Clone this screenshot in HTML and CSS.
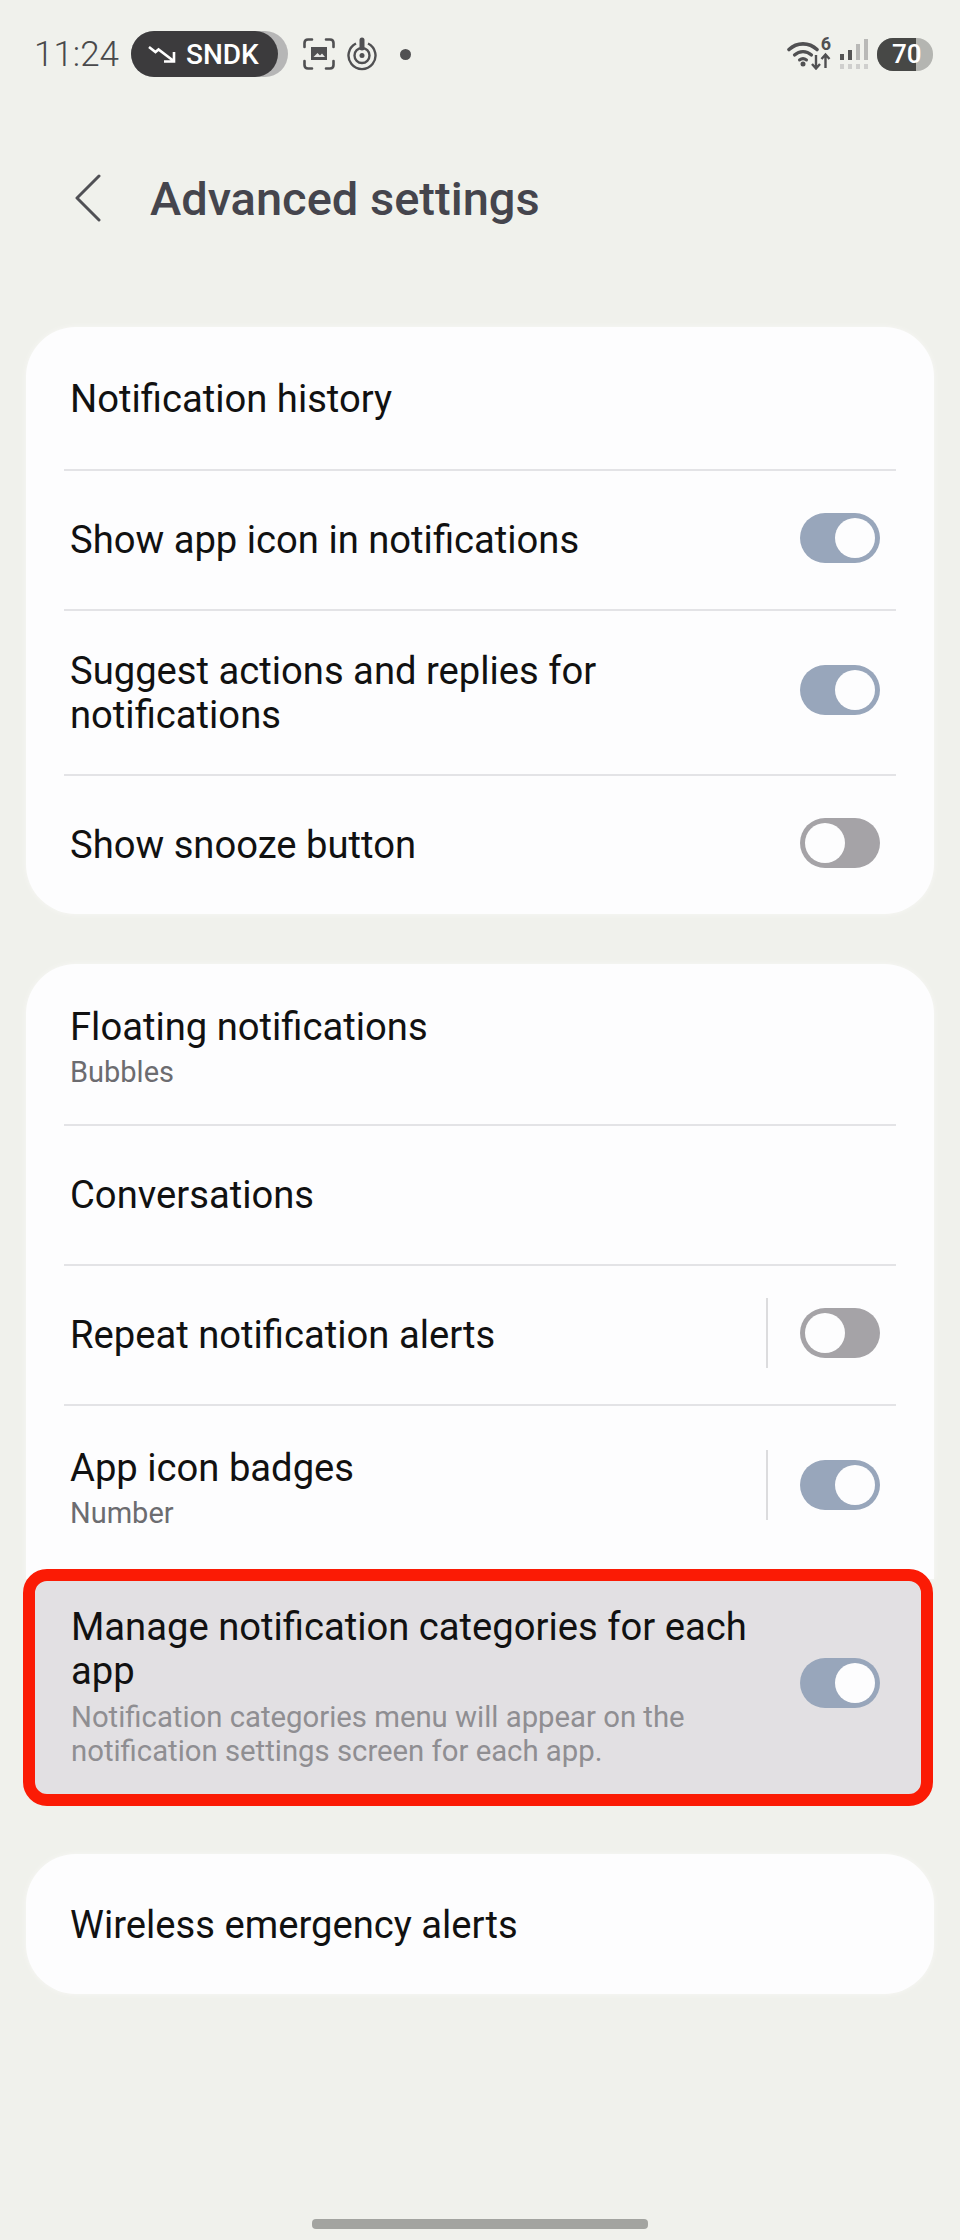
FILE: index.html
```html
<!DOCTYPE html>
<html lang="en">
<head>
    <meta charset="UTF-8">
    <meta name="viewport" content="width=device-width, initial-scale=1.0">
    <title>Advanced settings</title>
    <link rel="stylesheet" href="styles.css">
</head>
<body>
    <div class="status-bar">
        <span class="clock">11:24</span>
        <div class="ticker">
            <div class="ticker-pill">
                <svg class="ticker-arrow" width="28" height="18" viewBox="0 0 28 18" fill="none" stroke="#fff" stroke-width="2.6">
                    <path d="M1 2l6.5 5 3-2.5L25 15.5M26 7v9.5H16"/>
                </svg>
                <span>SNDK</span>
            </div>
        </div>
        <svg class="icon-capture" width="32" height="32" viewBox="0 0 32 32" fill="none" stroke="#505052" stroke-width="2.6" stroke-linecap="round">
            <path d="M1.5 9V5q0-3.5 3.500-3.500H9M23 1.500h4q3.500 0 3.500 3.500V9M30.500 23v4q0 3.500-3.500 3.500h-4M9 30.500H5q-3.500 0-3.500-3.500v-4"/>
            <path d="M8 9h16v13H8z" fill="#505052" stroke="none"/>
            <path d="M10.500 19l4-4 2.500 2.500 2-2 3 3.500z" fill="#e8e8e6" stroke="none"/>
        </svg>
        <svg class="icon-target" width="30" height="34" viewBox="0 0 30 34" fill="none" stroke="#505052" stroke-width="2.400">
            <path d="M9 6.500a13.500 13.500 0 1 0 12 0"/>
            <circle cx="15" cy="18.500" r="7.500"/>
            <circle cx="15" cy="18.500" r="2.500" fill="#505052" stroke="none"/>
            <path d="M15 3v8" stroke-width="5" stroke-linecap="round"/>
        </svg>
        <span class="status-dot"></span>

        <div class="status-right">
            <div class="wifi">
                <svg width="44" height="32" viewBox="0 0 44 32" fill="none" stroke="#505052">
                    <path d="M2 11.500c8-7.500 20-7.500 28 0" stroke-width="3.600" stroke-linecap="round"/>
                    <path d="M7.500 17c5-4.500 12-4.500 17 0" stroke-width="3.200" stroke-linecap="round"/>
                    <path d="M12.500 22c2.500-2 4.500-2 7 0" stroke-width="3" stroke-linecap="round"/>
                    <circle cx="16" cy="26" r="2.500" fill="#505052" stroke="none"/>
                    <path d="M29 17v13M25 26l4 4.500 4-4.500M38.500 30V17M34.500 21l4-4.500 4 4.500" stroke-width="2.400"/>
                </svg>
                <span class="wifi-gen">6</span>
            </div>
            <svg class="signal" width="28" height="32" viewBox="0 0 28 32">
                <rect x="0" y="16" width="4" height="6" fill="#555"/>
                <rect x="8" y="12" width="4" height="10" fill="#555"/>
                <rect x="16" y="6" width="4" height="16" fill="#b9b9b7"/>
                <rect x="24" y="1" width="4" height="21" fill="#b9b9b7"/>
                <rect x="0" y="26" width="4" height="5" fill="#cfcfcd"/>
                <rect x="8" y="26" width="4" height="5" fill="#cfcfcd"/>
                <rect x="16" y="26" width="4" height="5" fill="#cfcfcd"/>
                <rect x="24" y="26" width="4" height="5" fill="#cfcfcd"/>
            </svg>
            <div class="battery"><span class="battery-level">70</span></div>
        </div>
    </div>

    <div class="header">
        <svg class="back" width="26" height="48" viewBox="0 0 26 48" fill="none" stroke="#505055" stroke-width="3" stroke-linecap="round" stroke-linejoin="round">
            <path d="M24 2L2 24l22 22"/>
        </svg>
        <h1>Advanced settings</h1>
    </div>

    <div class="card first">
        <div class="row row-short"><div class="row-text"><div class="row-title">Notification history</div></div></div>
        <div class="row row-line">
            <div class="row-text"><div class="row-title">Show app icon in notifications</div></div>
            <span class="toggle on"></span>
        </div>
        <div class="row row-line row-tall">
            <div class="row-text"><div class="row-title">Suggest actions and replies for notifications</div></div>
            <span class="toggle on"></span>
        </div>
        <div class="row row-line">
            <div class="row-text"><div class="row-title">Show snooze button</div></div>
            <span class="toggle"></span>
        </div>
    </div>

    <div class="group">
        <div class="card card-open">
            <div class="row row-sub">
                <div class="row-text">
                    <div class="row-title">Floating notifications</div>
                    <div class="row-sub-text">Bubbles</div>
                </div>
            </div>
            <div class="row row-line"><div class="row-text"><div class="row-title">Conversations</div></div></div>
            <div class="row row-line">
                <div class="row-text"><div class="row-title">Repeat notification alerts</div></div>
                <span class="row-sep"></span>
                <span class="toggle"></span>
            </div>
            <div class="row row-line row-tall">
                <div class="row-text">
                    <div class="row-title">App icon badges</div>
                    <div class="row-sub-text">Number</div>
                </div>
                <span class="row-sep"></span>
                <span class="toggle on"></span>
            </div>
        </div>
        <div class="highlight">
            <div class="row-text">
                <div class="row-title">Manage notification categories for each app</div>
                <div class="row-sub-text">Notification categories menu will appear on the notification settings screen for each app.</div>
            </div>
            <span class="toggle on"></span>
        </div>
    </div>

    <div class="card last">
        <div class="row row-short row-single"><div class="row-text"><div class="row-title">Wireless emergency alerts</div></div></div>
    </div>

    <div class="home-bar"></div>
</body>
</html>
```

FILE: styles.css
```css
body {
    margin: 0;
    background: #f0f1ec;
    font-family: Roboto, "Liberation Sans", sans-serif;
    color: #111;
}

/* status bar */
.status-bar {
    height: 108px;
    display: flex;
    align-items: center;
    padding: 0 27px 0 34px;
}
.clock {
    font-size: 35px;
    font-weight: 300;
    color: #49494b;
    width: 97px;
}
.ticker {
    width: 157px;
    height: 46px;
    border-radius: 23px;
    background: #b6b6b6;
}
.ticker-pill {
    width: 147px;
    height: 46px;
    box-sizing: border-box;
    padding-left: 17px;
    border-radius: 23px;
    background: #3c3b3d;
    color: #fff;
    font-size: 28px;
    font-weight: 500;
    display: flex;
    align-items: center;
    gap: 10px;
}
.icon-capture {
    margin-left: 15px;
}
.icon-target {
    margin-left: 12px;
}
.status-dot {
    width: 11px;
    height: 11px;
    border-radius: 50%;
    background: #505052;
    margin-left: 23px;
}
.status-right {
    margin-left: auto;
    display: flex;
    align-items: center;
}
.wifi {
    display: flex;
    align-items: flex-start;
    position: relative;
    width: 44px;
}
.wifi-gen {
    position: absolute;
    right: 0;
    top: -5px;
    font-size: 18px;
    font-weight: 700;
    color: #505052;
}
.signal {
    margin-left: 9px;
}
.battery {
    width: 56px;
    height: 33px;
    margin-left: 9px;
    border-radius: 16px;
    background: #b4b5b1;
    overflow: hidden;
}
.battery-level {
    display: block;
    width: 39px;
    height: 33px;
    box-sizing: border-box;
    padding-left: 15px;
    background: #474846;
    color: #fff;
    font-size: 26px;
    font-weight: 500;
    line-height: 33px;
    white-space: nowrap;
}

/* page title */
.header {
    height: 180px;
    margin-bottom: 39px;
    display: flex;
    align-items: center;
    padding-left: 75px;
}
.header h1 {
    margin: 0 0 0 49px;
    font-size: 47px;
    font-weight: 500;
    color: #45454d;
}

/* cards */
.card {
    margin: 0 26px;
    padding: 0 38px;
    background: #fdfdfe;
    border-radius: 50px;
    box-shadow: 0 0 5px #f8f8f6;
}
.first {
    margin-bottom: 50px;
}
.card-open {
    border-radius: 50px 50px 0 0;
    padding-bottom: 10px;
    margin-bottom: -10px;
}
.group {
    margin-bottom: 48px;
}
.row {
    height: 140px;
    box-sizing: border-box;
    display: flex;
    align-items: center;
    padding: 0 16px 0 6px;
}
.row-short {
    height: 142px;
    padding-top: 2px;
}
.row-single {
    height: 140px;
}
.row-sub {
    height: 160px;
}
.row-sub .row-text {
    padding-top: 6px;
}
.row-tall {
    height: 165px;
}
.row-line {
    border-top: 2px solid #e3e3e6;
}
.row-text {
    flex: 1;
    min-width: 0;
}
.row-title {
    font-size: 38.2px;
    line-height: 44px;
}
.row-sub-text {
    margin-top: 6px;
    font-size: 29px;
    line-height: 34px;
    color: #6c6c70;
}
.row-sep {
    width: 2px;
    height: 70px;
    margin-bottom: 5px;
    background: #dcdcde;
}

/* toggles */
.toggle {
    flex: none;
    width: 80px;
    height: 50px;
    box-sizing: border-box;
    margin: 0 0 5px 32px;
    padding: 5px;
    border-radius: 25px;
    background: #a5a3a7;
    display: flex;
}
.toggle::after {
    content: "";
    width: 40px;
    height: 40px;
    border-radius: 50%;
    background: #fdfdfe;
}
.toggle.on {
    background: #98a6bb;
    justify-content: flex-end;
}

/* red annotation round the last row */
.highlight {
    position: relative;
    margin: 0 27px 0 23px;
    height: 237px;
    box-sizing: border-box;
    border: 12px solid #fb1b05;
    border-radius: 24px;
    background: #e2e0e3;
    display: flex;
    align-items: center;
    padding: 0 41px 0 36px;
}
.highlight .row-text {
    padding-bottom: 3px;
}
.highlight .row-sub-text {
    margin-top: 7px;
    font-size: 29.3px;
    color: #8f8e92;
}
.highlight .toggle {
    margin-bottom: 10px;
}

.home-bar {
    width: 336px;
    height: 10px;
    margin: 225px auto 0;
    border-radius: 4px;
    background: #a3a4a0;
}
```
